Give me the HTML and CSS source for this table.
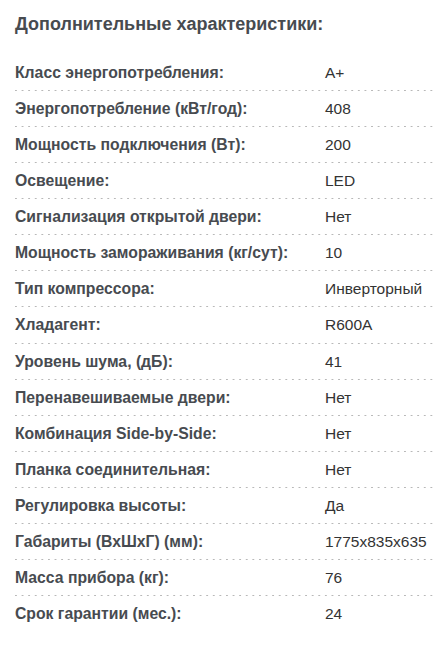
FILE: index.html
```html
<!DOCTYPE html>
<html lang="ru">
<head>
<meta charset="utf-8">
<link rel="stylesheet" href="styles.css">
</head>
<body>
<div class="specs">
  <h2 class="title">Дополнительные характеристики:</h2>
  <div class="list">
    <div class="row"><span class="label">Класс энергопотребления:</span><span class="value">A+</span></div>
    <div class="row"><span class="label">Энергопотребление (кВт/год):</span><span class="value">408</span></div>
    <div class="row"><span class="label">Мощность подключения (Вт):</span><span class="value">200</span></div>
    <div class="row"><span class="label">Освещение:</span><span class="value">LED</span></div>
    <div class="row"><span class="label">Сигнализация открытой двери:</span><span class="value">Нет</span></div>
    <div class="row"><span class="label">Мощность замораживания (кг/сут):</span><span class="value">10</span></div>
    <div class="row"><span class="label">Тип компрессора:</span><span class="value">Инверторный</span></div>
    <div class="row"><span class="label">Хладагент:</span><span class="value">R600A</span></div>
    <div class="row"><span class="label">Уровень шума, (дБ):</span><span class="value">41</span></div>
    <div class="row"><span class="label">Перенавешиваемые двери:</span><span class="value">Нет</span></div>
    <div class="row"><span class="label">Комбинация Side-by-Side:</span><span class="value">Нет</span></div>
    <div class="row"><span class="label">Планка соединительная:</span><span class="value">Нет</span></div>
    <div class="row"><span class="label">Регулировка высоты:</span><span class="value">Да</span></div>
    <div class="row"><span class="label">Габариты (ВхШхГ) (мм):</span><span class="value">1775x835x635</span></div>
    <div class="row"><span class="label">Масса прибора (кг):</span><span class="value">76</span></div>
    <div class="row last"><span class="label">Срок гарантии (мес.):</span><span class="value">24</span></div>
  </div>
</div>
</body>
</html>
```
FILE: styles.css
```css
html, body {
  margin: 0;
  padding: 0;
  background: #ffffff;
}
body {
  font-family: "Liberation Sans", Arial, sans-serif;
}
.specs {
  padding: 13px 0 0 15px;
}
.title {
  margin: 0;
  font-size: 18px;
  font-weight: bold;
  color: #474b50;
  line-height: 23px;
}
.list {
  margin-top: 19px;
}
.row {
  display: flex;
  align-items: center;
  height: 36.07px;
  background-image: linear-gradient(to right, #b8b8b8 0, #b8b8b8 2px, transparent 2px);
  background-size: 6.6px 1px;
  background-repeat: repeat-x;
  background-position: 0 bottom;
}
.row.last {
  background-image: none;
}
.label {
  width: 310px;
  flex: none;
  font-size: 15.75px;
  font-weight: bold;
  color: #474b50;
}
.value {
  font-size: 15.5px;
  color: #333333;
}
```
